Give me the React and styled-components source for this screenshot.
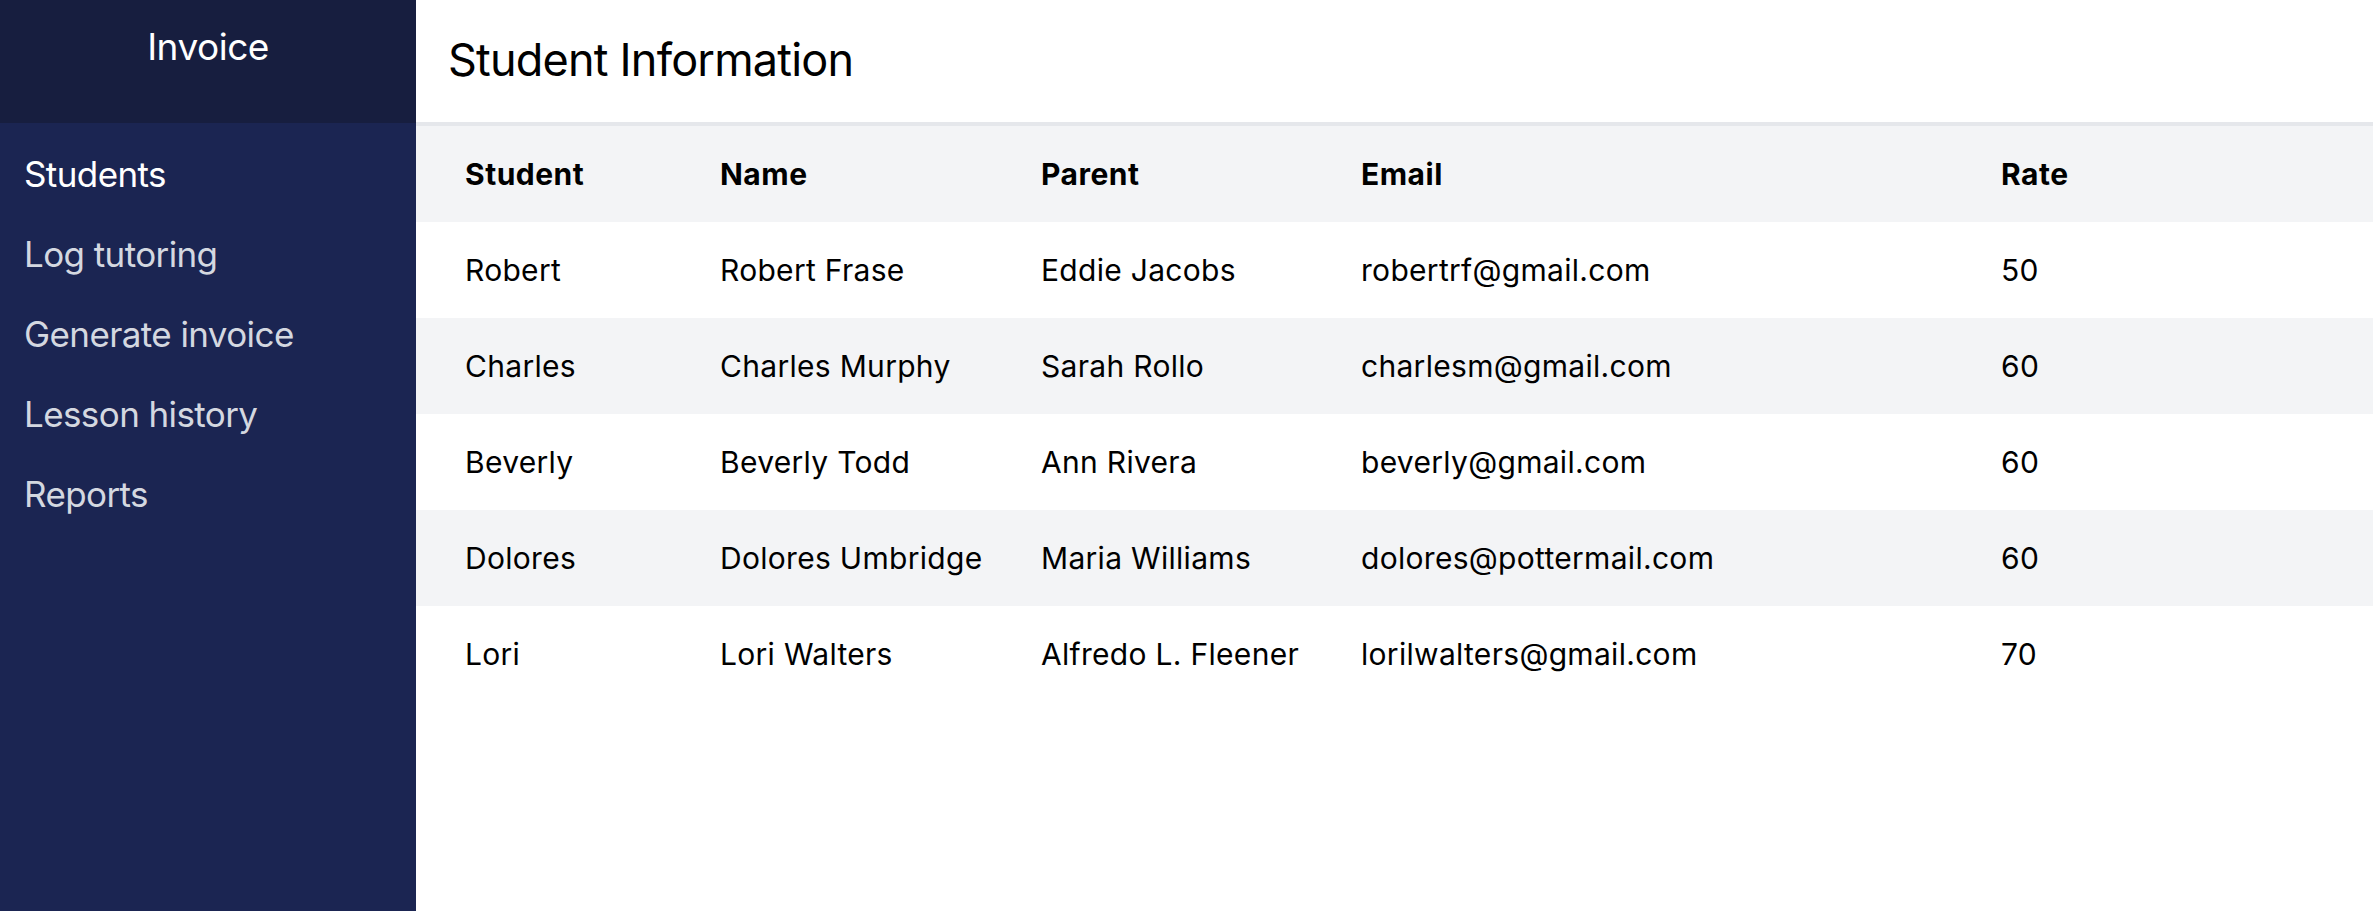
import React from "react";
import styled, { createGlobalStyle } from "styled-components";

const students = [
  { id: "Robert", name: "Robert Frase", parent: "Eddie Jacobs", email: "robertrf@gmail.com", rate: 50 },
  { id: "Charles", name: "Charles Murphy", parent: "Sarah Rollo", email: "charlesm@gmail.com", rate: 60 },
  { id: "Beverly", name: "Beverly Todd", parent: "Ann Rivera", email: "beverly@gmail.com", rate: 60 },
  { id: "Dolores", name: "Dolores Umbridge", parent: "Maria Williams", email: "dolores@pottermail.com", rate: 60 },
  { id: "Lori", name: "Lori Walters", parent: "Alfredo L. Fleener", email: "lorilwalters@gmail.com", rate: 70 },
];

const navItems = ["Students", "Log tutoring", "Generate invoice", "Lesson history", "Reports"];

export default function App() {
  return (
    <>
      <GlobalStyle />
      <Layout>
        <Sidebar>
          <Brand>Invoice</Brand>
          <Nav>
            {navItems.map((item) => (
              <NavItem key={item} active={item === "Students"}>
                {item}
              </NavItem>
            ))}
          </Nav>
        </Sidebar>
        <Main>
          <Header>
            <Title>Student Information</Title>
          </Header>
          <Table>
            <HeadRow>
              <HeadCell>Student</HeadCell>
              <HeadCell>Name</HeadCell>
              <HeadCell>Parent</HeadCell>
              <HeadCell>Email</HeadCell>
              <HeadCell>Rate</HeadCell>
            </HeadRow>
            {students.map((s, i) => (
              <Row key={s.id} striped={i % 2 === 1}>
                <Cell>{s.id}</Cell>
                <Cell>{s.name}</Cell>
                <Cell>{s.parent}</Cell>
                <Cell>{s.email}</Cell>
                <Cell>{s.rate}</Cell>
              </Row>
            ))}
          </Table>
        </Main>
      </Layout>
    </>
  );
}

const GlobalStyle = createGlobalStyle`
  html, body {
    margin: 0;
    padding: 0;
    height: 100%;
  }
  body {
    font-family: Inter, "Liberation Sans", sans-serif;
    color: #000;
    background: #fff;
  }
  #root {
    height: 100%;
  }
`;

const Layout = styled.div`
  display: flex;
  min-height: 911px;
  height: 100%;
`;

const Sidebar = styled.aside`
  width: 416px;
  flex-shrink: 0;
  display: flex;
  flex-direction: column;
  background: #1b2552;
`;

const Brand = styled.div`
  height: 123px;
  box-sizing: border-box;
  padding-top: 22px;
  background: #171e3f;
  color: #fff;
  text-align: center;
  font-size: 37px;
  line-height: 50px;
  letter-spacing: -0.5px;
`;

const Nav = styled.nav`
  display: flex;
  flex-direction: column;
  padding: 11px 24px 0;
`;

const NavItem = styled.a`
  display: block;
  height: 80px;
  line-height: 80px;
  font-size: 35px;
  letter-spacing: -0.6px;
  color: ${(props) => (props.active ? "#ffffff" : "#d4d8e0")};
  cursor: pointer;
`;

const Main = styled.main`
  flex: 1;
  display: flex;
  flex-direction: column;
  background: #fff;
`;

const Header = styled.header`
  height: 118px;
  display: flex;
  align-items: center;
  padding: 0 32px 4px;
  border-bottom: 4px solid #e5e7eb;
`;

const Title = styled.h1`
  margin: 0;
  font-size: 45px;
  font-weight: 400;
  letter-spacing: -0.8px;
`;

const Table = styled.div`
  display: flex;
  flex-direction: column;
`;

const HeadRow = styled.div`
  display: grid;
  grid-template-columns: 255px 321px 320px 640px 1fr;
  height: 96px;
  align-items: center;
  background: #f3f4f6;
`;

const Row = styled.div`
  display: grid;
  grid-template-columns: 255px 321px 320px 640px 1fr;
  height: 96px;
  align-items: center;
  background: ${(props) => (props.striped ? "#f3f4f6" : "#ffffff")};
`;

const HeadCell = styled.div`
  padding-left: 49px;
  font-size: 30px;
  font-weight: 700;
  letter-spacing: 0.5px;
  white-space: nowrap;
`;

const Cell = styled.div`
  padding-left: 49px;
  font-size: 30px;
  letter-spacing: 0.3px;
  white-space: nowrap;
`;
